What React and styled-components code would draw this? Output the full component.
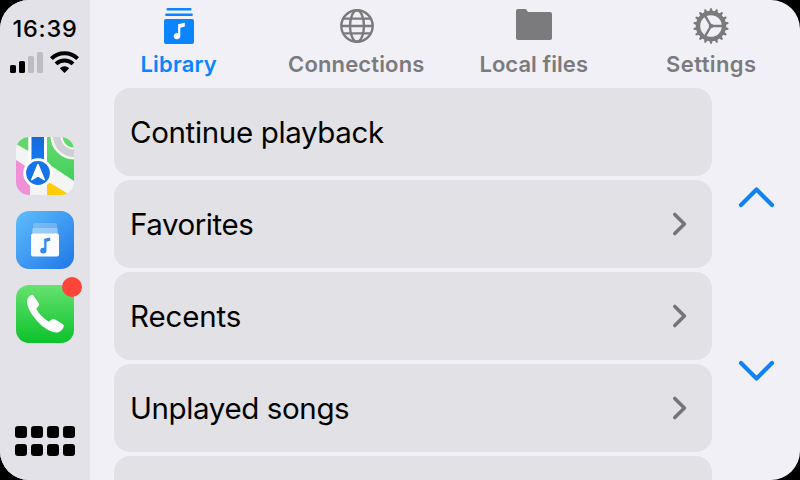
import React from "react";
import styled, { createGlobalStyle } from "styled-components";

const GlobalStyle = createGlobalStyle`
  *, *::before, *::after { box-sizing: border-box; }
  body { margin: 0; background: #000; }
  svg { display: block; }
`;

const Screen = styled.div`
  display: flex;
  width: 800px;
  height: 480px;
  overflow: hidden;
  border-radius: 29px;
  background: #f1f0f6;
  font-family: Inter, "Liberation Sans", sans-serif;
`;

const Sidebar = styled.aside`
  display: flex;
  flex-direction: column;
  align-items: center;
  flex: none;
  width: 90px;
  padding: 15px 0 24px;
  background: #e2e2e8;
`;

const Clock = styled.time`
  font-size: 23.5px;
  font-weight: 550;
  line-height: 28px;
  letter-spacing: 0.8px;
  color: #000;
`;

const StatusIcons = styled.div`
  display: flex;
  gap: 7px;
  height: 24px;
  margin: 7px 1px 0 0;
`;

const Dock = styled.nav`
  display: flex;
  flex-direction: column;
  gap: 16px;
  margin-top: 63px;
`;

const AppIcon = styled.div`
  position: relative;
  width: 58px;
  height: 58px;
`;

const Badge = styled.span`
  position: absolute;
  top: -8px;
  right: -8px;
  width: 20px;
  height: 20px;
  border-radius: 50%;
  background: #ff453a;
`;

const HomeGrid = styled.div`
  display: grid;
  grid-template-columns: repeat(4, 12px);
  gap: 6px 4px;
  margin-top: auto;
`;

const HomeDot = styled.span`
  height: 12px;
  border-radius: 3px;
  background: #000;
`;

const Main = styled.main`
  display: flex;
  flex-direction: column;
  flex: 1;
  min-width: 0;
`;

const TabBar = styled.nav`
  display: grid;
  grid-template-columns: repeat(4, 1fr);
  flex: none;
  height: 88px;
`;

const Tab = styled.div`
  display: flex;
  flex-direction: column;
  align-items: center;
  padding-top: 6px;
  color: ${(p) => (p.$active ? "#0a84ff" : "#7b7b7e")};
`;

const TabLabel = styled.span`
  margin-top: 4px;
  font-size: 22px;
  font-weight: 600;
  line-height: 28px;
  letter-spacing: ${(p) => p.$tracking}px;
  white-space: nowrap;
`;

const Content = styled.div`
  display: flex;
  flex: 1;
  min-height: 0;
  padding-left: 24px;
`;

const List = styled.div`
  display: flex;
  flex-direction: column;
  gap: 4px;
  flex: none;
  width: 598px;
  overflow: hidden;
`;

const Row = styled.div`
  display: flex;
  align-items: center;
  justify-content: space-between;
  flex: none;
  height: 88px;
  padding: 0 24px 0 16px;
  border-radius: 16px;
  background: #e2e1e6;
`;

const RowLabel = styled.span`
  font-size: 29.5px;
  line-height: 36px;
  letter-spacing: ${(p) => p.$tracking}px;
  color: #000;
`;

const Scroller = styled.div`
  display: flex;
  flex-direction: column;
  justify-content: space-between;
  align-items: center;
  flex: 1;
  height: 208px;
  margin-top: 92px;
  padding: 4px 0;
`;

const SignalIcon = () => (
  <svg width="33" height="24" viewBox="0 0 33 24">
    <rect x="0" y="15" width="6" height="8" rx="1.6" />
    <rect x="9" y="11" width="6" height="12" rx="1.6" />
    <rect x="18" y="6" width="6" height="17" rx="1.6" fill="#bcbcc2" />
    <rect x="27" y="2" width="6" height="21" rx="1.6" fill="#bcbcc2" />
  </svg>
);

const WifiIcon = () => (
  <svg width="29" height="24" viewBox="0 0 29 24" fill="none" stroke="#000" strokeWidth="4">
    <path d="M1.400 8.700a18.600 18.600 0 0 1 26.200 0" />
    <path d="M6 13.900a12.200 12.200 0 0 1 17 0" />
    <path d="M9.800 18.200a6.800 6.800 0 0 1 9.400 0L14.500 23z" fill="#000" stroke="none" />
  </svg>
);

const MapsIcon = () => (
  <svg width="58" height="58" viewBox="0 0 58 58">
    <defs>
      <clipPath id="mapsClip"><rect width="58" height="58" rx="13" /></clipPath>
      <linearGradient id="mapsGreen" x1="0" y1="0" x2="0" y2="1">
        <stop offset="0" stopColor="#66da70" /><stop offset="1" stopColor="#43cf5b" />
      </linearGradient>
      <linearGradient id="mapsRoad" x1="0" y1="0" x2="0" y2="1">
        <stop offset="0" stopColor="#1769d8" /><stop offset="1" stopColor="#0f82ff" />
      </linearGradient>
    </defs>
    <g clipPath="url(#mapsClip)">
      <rect width="58" height="58" fill="#f3f4f4" />
      <path d="M0 0h12.500v14L0 7z" fill="#63d66e" />
      <path d="M0 23l14 9v26H0z" fill="#ee8fd7" />
      <path d="M31 0h27v44L31 26z" fill="url(#mapsGreen)" />
      <path d="M31 44l23 14H31z" fill="#ffcc08" />
      <circle cx="58" cy="-1" r="22" fill="none" stroke="#f4f7f4" strokeWidth="3" />
      <circle cx="58" cy="-1" r="17" fill="none" stroke="#cfcfd4" strokeWidth="7.500" />
      <circle cx="58" cy="-1" r="12.500" fill="none" stroke="#f4f7f4" strokeWidth="2" />
      <path d="M12.500 0h3v30h-3zM28 0h3v30h-3z" fill="#fff" />
      <rect x="15.500" width="12.500" height="34" fill="url(#mapsRoad)" />
      <circle cx="22" cy="36" r="14.800" fill="#fff" />
      <circle cx="22" cy="36" r="11.900" fill="#1474e8" />
      <path d="M22 27.600l6.300 15.100L22 39l-6.300 3.700z" fill="#fff" stroke="#fff" strokeWidth="1.400" strokeLinejoin="round" />
    </g>
  </svg>
);

const MusicIcon = () => (
  <svg width="58" height="58" viewBox="0 0 58 58">
    <defs>
      <linearGradient id="musicBg" x1="0" y1="0" x2="1" y2="1">
        <stop offset="0" stopColor="#60bdfb" /><stop offset="1" stopColor="#1f77e8" />
      </linearGradient>
    </defs>
    <rect width="58" height="58" rx="13" fill="url(#musicBg)" />
    <rect x="17" y="12" width="24" height="12" rx="1.500" fill="#fff" opacity=".22" />
    <rect x="16" y="17" width="26" height="10" rx="1.500" fill="#fff" opacity=".3" />
    <rect x="15" y="22.500" width="28" height="23" rx="2" fill="#fafcff" />
    <path d="M28.200 27.800l6-1.200v3.200l-3.700 1v8.800a3.200 2.900 0 1 1-2.300-2.700z" fill="#318bee" />
  </svg>
);

const PhoneIcon = () => (
  <svg width="58" height="58" viewBox="0 0 58 58">
    <defs>
      <linearGradient id="phoneBg" x1="0" y1="0" x2="0" y2="1">
        <stop offset="0" stopColor="#66e26f" /><stop offset="1" stopColor="#0cc22c" />
      </linearGradient>
    </defs>
    <rect width="58" height="58" rx="13" fill="url(#phoneBg)" />
    <path
      d="M11 16.500c0-2.400 1.200-4.500 3.300-6 1.400-1 2.600-.8 3.500.4l4.800 7c.8 1.200.7 2.300-.3 3.300l-1.500 1.600c-.5.600-.5 1.200-.1 1.900 2.200 3.900 6.400 8.300 11 11.300.8.500 1.400.5 2 0l2-1.600c1-.8 2-.8 3.100-.1l7.800 4.700c1.200.8 1.500 1.800.9 3.200-1.300 3.100-3.900 5.300-7.200 5.300-4.700 0-11.400-3.400-17.300-9.400C15.800 30.500 11 22.500 11 16.500z"
      fill="#fff"
    />
  </svg>
);

const LibraryIcon = () => (
  <svg width="40" height="40" viewBox="0 0 40 40" fill="currentColor">
    <rect x="7.500" y="2" width="25" height="2.600" rx="1" />
    <rect x="6.200" y="7.500" width="27.600" height="2.600" rx="1" />
    <rect x="5" y="13" width="30" height="25" rx="2" />
    <path d="M19.100 18.300l6.700-1.500v3.800l-4.500 1.200v8.500a3.300 3.100 0 1 1-2.200-3z" fill="#fff" />
  </svg>
);

const GlobeIcon = () => (
  <svg width="40" height="40" viewBox="0 0 40 40" fill="none" stroke="currentColor" strokeWidth="2.400">
    <circle cx="21" cy="20" r="15.700" />
    <ellipse cx="21" cy="20" rx="7" ry="15.700" />
    <path d="M5 20h32M7.500 12.600h27M7.500 27.400h27" />
  </svg>
);

const FolderIcon = () => (
  <svg width="40" height="40" viewBox="0 0 40 40" fill="currentColor">
    <path d="M2 5a2 2 0 0 1 2-2h7.500c1.500 0 1.500 3 3 3H36a2 2 0 0 1 2 2v24a2 2 0 0 1-2 2H4a2 2 0 0 1-2-2z" />
  </svg>
);

const TEETH = Array.from({ length: 18 }, (_, i) => i * 20);

const GearIcon = () => (
  <svg width="40" height="40" viewBox="0 0 40 40" fill="none" stroke="currentColor">
    <circle cx="20" cy="20" r="13" strokeWidth="4.400" />
    {TEETH.map((angle) => (
      <path key={angle} d="M18.300 6l.7-3.300q1-1.200 2 0l.7 3.300z" fill="currentColor" stroke="none" transform={`rotate(${angle} 20 20)`} />
    ))}
    <path d="M20 20h12M20 20l-6-10.400M20 20l-6 10.400" strokeWidth="2.400" />
    <circle cx="20" cy="20" r="2.300" fill="currentColor" stroke="none" />
  </svg>
);

const RowChevron = () => (
  <svg width="16" height="26" viewBox="0 0 16 26" fill="none" stroke="#747479" strokeWidth="3.600" strokeLinecap="round" strokeLinejoin="round">
    <path d="M2.800 3.500l9.600 9.500-9.600 9.500" />
  </svg>
);

const ScrollChevron = ({ d }) => (
  <svg width="40" height="26" viewBox="0 0 40 26" fill="none" stroke="#0f82f5" strokeWidth="4.200" strokeLinecap="round" strokeLinejoin="round">
    <path d={d} />
  </svg>
);

const TABS = [
  { label: "Library", Icon: LibraryIcon, active: true, tracking: 0.2 },
  { label: "Connections", Icon: GlobeIcon, tracking: 0.15 },
  { label: "Local files", Icon: FolderIcon, tracking: 0.05 },
  { label: "Settings", Icon: GearIcon, tracking: 0.4 },
];

const ROWS = [
  { label: "Continue playback", tracking: -0.35 },
  { label: "Favorites", tracking: -0.45, chevron: true },
  { label: "Recents", tracking: -0.15, chevron: true },
  { label: "Unplayed songs", tracking: -0.38, chevron: true },
];

export default function App() {
  return (
    <>
      <GlobalStyle />
      <Screen>
        <Sidebar>
          <Clock>16:39</Clock>
          <StatusIcons>
            <SignalIcon />
            <WifiIcon />
          </StatusIcons>
          <Dock>
            <AppIcon><MapsIcon /></AppIcon>
            <AppIcon><MusicIcon /></AppIcon>
            <AppIcon><PhoneIcon /><Badge /></AppIcon>
          </Dock>
          <HomeGrid>
            {Array.from({ length: 8 }, (_, i) => <HomeDot key={i} />)}
          </HomeGrid>
        </Sidebar>
        <Main>
          <TabBar>
            {TABS.map(({ label, Icon, active, tracking }) => (
              <Tab key={label} $active={active}>
                <Icon />
                <TabLabel $tracking={tracking}>{label}</TabLabel>
              </Tab>
            ))}
          </TabBar>
          <Content>
            <List>
              {ROWS.map(({ label, tracking, chevron }) => (
                <Row key={label}>
                  <RowLabel $tracking={tracking}>{label}</RowLabel>
                  {chevron && <RowChevron />}
                </Row>
              ))}
              <Row />
            </List>
            <Scroller>
              <ScrollChevron d="M5 21L20.500 5.500L36 21" />
              <ScrollChevron d="M5 5L20.500 20.500L36 5" />
            </Scroller>
          </Content>
        </Main>
      </Screen>
    </>
  );
}
